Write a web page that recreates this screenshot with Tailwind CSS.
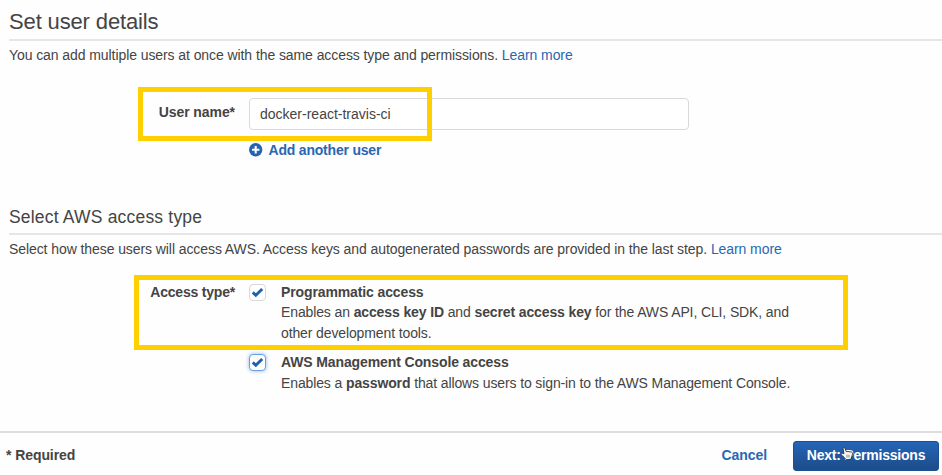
<!DOCTYPE html>
<html lang="en">
<head>
<meta charset="utf-8">
<title>Add user</title>
<script src="https://cdn.jsdelivr.net/npm/@tailwindcss/browser@4"></script>
</head>
<body class="bg-[#fefefe]">
<div class="relative flex h-[475px] w-[942px] flex-col overflow-hidden font-['Liberation_Sans',Arial,sans-serif] text-[14px] leading-[20.5px] tracking-[-0.08px] text-[#444]">
  <section class="h-[204px] pl-[9px]">
    <h1 class="h-[41px] border-b-2 border-[#e6e6e6] pt-[9px] text-[22px] leading-[26px] tracking-[-0.14px]"><span>Set user details</span></h1>
    <p class="pt-[4px] whitespace-nowrap"><span>You can add multiple users at once with the same access type and permissions.</span> <a class="text-[#2a67b2]">Learn more</a></p>
    <div class="mt-[32px] flex">
      <label class="w-[226px] pt-[4px] text-right font-bold"><span>User name*</span></label>
      <div class="ml-[14px]">
        <div class="flex h-[32px] w-[440px] items-center rounded-[4px] border border-[#d9d9d9] bg-white pt-[2px] pl-[10px] tracking-[0px]"><span>docker-react-travis-ci</span></div>
        <a class="mt-[10px] flex items-center font-bold tracking-[-0.2px] text-[#2a67b2]">
          <svg class="mr-[5.5px] h-[14px] w-[14px]" viewBox="0 0 14 14"><circle cx="6.7" cy="6.7" r="6.7" fill="#2463b1"/><path d="M6.7 3v7.4M3 6.7h7.4" stroke="#fff" stroke-width="2.1"/></svg>
          <span>Add another user</span>
        </a>
      </div>
    </div>
  </section>
  <section class="h-[227px] pl-[9px]">
    <h2 class="h-[31px] border-b-2 border-[#e6e6e6] pt-[3px] text-[17.5px] leading-[20px] tracking-[0.19px]"><span>Select AWS access type</span></h2>
    <p class="pt-[4px] whitespace-nowrap"><span>Select how these users will access AWS. Access keys and autogenerated passwords are provided in the last step.</span> <a class="text-[#2a67b2]">Learn more</a></p>
    <div class="mt-[22px] flex">
      <div class="w-[226px] text-right font-bold tracking-[-0.2px]"><span>Access type*</span></div>
      <div class="ml-[14px] flex flex-col gap-[9px] tracking-[-0.12px]">
        <div class="flex">
          <span class="mt-[2px] mr-[15px] flex h-[17px] w-[17px] items-center justify-center rounded-[4px] border border-[#d8d8d8] bg-white"><svg class="h-[11px] w-[11px]" viewBox="0 0 11 11"><path d="M.8 5.4 3.8 8.2 10.2 2" fill="none" stroke="#1f60b3" stroke-width="2.9"/></svg></span>
          <div class="whitespace-nowrap"><b>Programmatic access</b><br>Enables an <b>access key ID</b> and <b>secret access key</b> for the AWS API, CLI, SDK, and<br>other development tools.</div>
        </div>
        <div class="flex">
          <span class="mt-[2px] mr-[15px] flex h-[17px] w-[17px] items-center justify-center rounded-[4px] border border-[#67a0dc] bg-white shadow-[0_0_4px_#8fbcec]"><svg class="h-[11px] w-[11px]" viewBox="0 0 11 11"><path d="M.8 5.4 3.8 8.2 10.2 2" fill="none" stroke="#1f60b3" stroke-width="2.9"/></svg></span>
          <div class="whitespace-nowrap"><b>AWS Management Console access</b><br>Enables a <b>password</b> that allows users to sign-in to the AWS Management Console.</div>
        </div>
      </div>
    </div>
  </section>
  <footer class="flex h-[44px] items-center border-t-2 border-[#dedede] pt-[3px] pr-[3px] pl-[6px] font-bold">
    <span>* Required</span>
    <a class="ml-auto text-[#2a67b2]">Cancel</a>
    <button class="ml-[26px] h-[30px] w-[146px] rounded-[3px] border border-[#1c4f91] bg-linear-to-b from-[#2465b8] to-[#1d4c89] tracking-[-0.22px] whitespace-nowrap text-white">Next: Permissions</button>
  </footer>
  <div class="absolute top-[87px] left-[138px] h-[54px] w-[294px] border-[5px] border-[#ffcf00]"></div>
  <div class="absolute top-[275px] left-[134px] h-[75px] w-[714px] border-[5px] border-[#ffcf00]"></div>
  <svg class="absolute top-[447px] left-[840px] h-[14px] w-[14px]" viewBox="0 0 14 14"><path d="M3 1.2C3.8.2 5 .8 5.3 2l.7 2.4 5 .5c1.2.2 1.7 1 1.5 2.1l-.8 3-1.2 2.6H6L4 10.2 1 7.6C.6 6.4 1.7 5.9 3.9 6.8Z" fill="#f4f4f4" stroke="#222" stroke-width=".8"/><path d="M7 7.8v2.8M9 7.8v2.8" stroke="#555" stroke-width=".7"/></svg>
</div>
</body>
</html>
